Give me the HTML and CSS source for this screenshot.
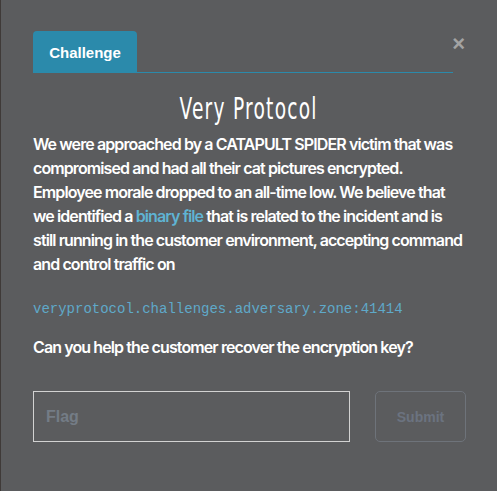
FILE: index.html
```html
<!DOCTYPE html>
<html>
<head>
<meta charset="utf-8">
<link rel="stylesheet" href="styles.css">
</head>
<body>
<div class="modal">
  <div class="tabs">
    <div class="tab">Challenge</div>
    <div class="close">&#215;</div>
  </div>
  <h1 class="title"><span>Very Protocol</span></h1>
  <div class="desc">
    <p>We were approached by a CATAPULT SPIDER victim that was compromised and had all their cat pictures encrypted. Employee morale dropped to an all-time low. We believe that we identified a <a href="#">binary file</a> that is related to the incident and is still running in the customer environment, accepting command and control traffic on</p>
    <p class="code">veryprotocol.challenges.adversary.zone:41414</p>
    <p>Can you help the customer recover the encryption key?</p>
  </div>
  <form class="flag-form">
    <input class="flag-input" type="text" placeholder="Flag">
    <button class="submit" type="button">Submit</button>
  </form>
</div>
</body>
</html>
```
FILE: styles.css
```css
html, body {
  margin: 0;
  padding: 0;
  background: #5b5c5e;
  height: 100%;
}
body {
  border-left: 1px solid #3f3a38;
  box-sizing: border-box;
}
.modal {
  padding: 31px 20px 0 32px;
  font-family: Inter, "Liberation Sans", sans-serif;
  color: #ffffff;
}
.tabs {
  display: flex;
  align-items: flex-end;
  border-bottom: 1px solid #2b8aab;
  position: relative;
  width: 420px;
}
.tab {
  background: #2b8aab;
  border-radius: 4px 4px 0 0;
  width: 104px;
  height: 41px;
  box-sizing: border-box;
  display: flex;
  align-items: center;
  justify-content: center;
  font-family: "Liberation Sans", Arial, sans-serif;
  font-weight: bold;
  font-size: 15px;
  color: #ffffff;
  padding-top: 2px;
}
.close {
  position: absolute;
  right: -12px;
  top: 1px;
  font-family: "Liberation Sans", Arial, sans-serif;
  font-weight: bold;
  font-size: 22px;
  color: #a3a3a3;
  line-height: 24px;
}
.title {
  margin: 18px 0 5px 0;
  padding-left: 6px;
  text-align: center;
  font-family: "DejaVu Sans", sans-serif;
  font-weight: normal;
  font-size: 30px;
  line-height: 36px;
  width: 420px;
}
.title span {
  display: inline-block;
  transform: scaleX(0.62);
  letter-spacing: 2px;
}
.desc {
  margin-top: 0;
  font-weight: 600;
  font-size: 16px;
  line-height: 24px;
  letter-spacing: -0.9px;
  width: 432px;
}
.desc p {
  margin: 0 0 21px 0;
}
.desc a {
  color: #5fb3d3;
  text-decoration: none;
}
.desc .code {
  font-family: "Liberation Mono", monospace;
  font-weight: normal;
  font-size: 14px;
  letter-spacing: 0;
  color: #5fa9c9;
  margin: 0 0 14px 0;
}
.flag-form {
  display: flex;
  gap: 25px;
  margin-top: 32px;
}
.flag-input {
  width: 317px;
  height: 51px;
  flex: none;
  box-sizing: border-box;
  background: transparent;
  border: 1px solid #d2d2d2;
  border-radius: 0;
  padding: 0 12px;
  font-family: "Liberation Sans", Arial, sans-serif;
  font-weight: bold;
  font-size: 16px;
  color: #ffffff;
  outline: none;
}
.flag-input::placeholder {
  color: #747c86;
}
.submit {
  width: 91px;
  height: 51px;
  flex: none;
  box-sizing: border-box;
  background: transparent;
  border: 1px solid #6e737a;
  border-radius: 5px;
  font-family: "Liberation Sans", Arial, sans-serif;
  font-weight: bold;
  font-size: 14px;
  color: #6b7380;
}
```
